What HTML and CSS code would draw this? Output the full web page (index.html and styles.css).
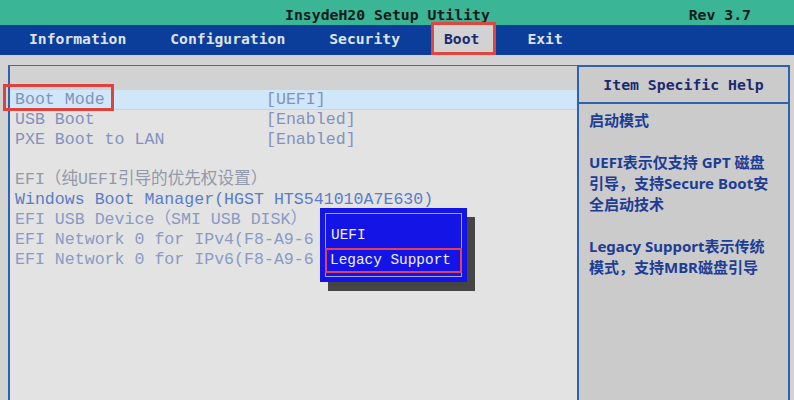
FILE: index.html
```html
<!DOCTYPE html>
<html lang="en">
<head>
  <meta charset="UTF-8">
  <title>InsydeH20 Setup Utility</title>
  <link rel="stylesheet" href="styles.css">
</head>
<body>
  <div class="titlebar">
    <span class="title">InsydeH20 Setup Utility</span>
    <span class="rev">Rev 3.7</span>
  </div>

  <div class="menubar">
    <span class="menu-item">Information</span>
    <span class="menu-item">Configuration</span>
    <span class="menu-item">Security</span>
    <span class="menu-item active">Boot</span>
    <span class="menu-item">Exit</span>
  </div>

  <div class="main">
    <div class="settings">
      <div class="settings-top"></div>
      <div class="row selected">
        <span class="label"><span class="marked">Boot Mode</span></span>
        <span class="value">[UEFI]</span>
      </div>
      <div class="row">
        <span class="label">USB Boot</span>
        <span class="value">[Enabled]</span>
      </div>
      <div class="row">
        <span class="label">PXE Boot to LAN</span>
        <span class="value">[Enabled]</span>
      </div>
      <div class="row"></div>
      <div class="row heading">EFI（纯UEFI引导的优先权设置）</div>
      <div class="row device primary">Windows Boot Manager(HGST HTS541010A7E630)</div>
      <div class="row device">EFI USB Device（SMI USB DISK）</div>
      <div class="row device">EFI Network 0 for IPv4(F8-A9-6</div>
      <div class="row device">EFI Network 0 for IPv6(F8-A9-6</div>

      <div class="popup">
        <div class="popup-inner">
          <div class="option">UEFI</div>
          <div class="option picked">Legacy Support</div>
        </div>
      </div>
    </div>

    <div class="help">
      <div class="help-title">Item Specific Help</div>
      <div class="help-body">
        <p>启动模式</p>
        <p>UEFI表示仅支持 GPT 磁盘<br>引导，支持Secure Boot安<br>全启动技术</p>
        <p>Legacy Support表示传统<br>模式，支持MBR磁盘引导</p>
      </div>
    </div>
  </div>
</body>
</html>
```

FILE: styles.css
```css
body {
  margin: 0;
  width: 794px;
  height: 400px;
  overflow: hidden;
  background: #d3d3d3;
  display: flex;
  flex-direction: column;
  font-family: 'DejaVu Sans Mono', 'Liberation Mono', monospace;
}

.titlebar {
  height: 25px;
  background: #3ab596;
  display: flex;
  align-items: flex-end;
  color: #151a1a;
  font-weight: bold;
  font-size: 14.8px;
  line-height: 21px;
  overflow: hidden;
}

.title {
  padding-left: 285px;
}

.rev {
  margin-left: auto;
  padding-right: 43px;
}

.menubar {
  height: 30px;
  background: #0b3e9a;
  display: flex;
  align-items: stretch;
  gap: 18px;
  padding-left: 16px;
}

.menu-item {
  padding: 0 13px;
  color: #dfe3ee;
  font-weight: bold;
  font-size: 14.7px;
  line-height: 28px;
}

.menu-item.active {
  background: #d2d2d2;
  color: #1b2a6e;
  padding: 0 17px 0 13px;
  margin-top: -3px;
  line-height: 34px;
  outline: 3px solid #e0453f;
  outline-offset: -3px;
}

.main {
  flex: 1;
  display: flex;
  padding: 10px 4px 0 8px;
  min-height: 0;
}

.settings {
  flex: 1;
  position: relative;
  background: #e3e3e3;
  border-left: 2px solid #2d62b3;
  border-top: 1px solid #3b6cb6;
  font-family: 'Liberation Mono', 'Noto Sans CJK SC', monospace;
  font-size: 16.6px;
  color: #8292bd;
}

.settings-top {
  height: 24px;
  background: #d2d2d2;
}

.row {
  height: 20px;
  line-height: 20px;
  display: flex;
  padding-left: 5px;
  white-space: nowrap;
}

.row.selected {
  background: #cfe7f8;
  border-bottom: 1px solid #c4d4e2;
  height: 19px;
}

.label {
  width: 251px;
}

.marked {
  position: relative;
}

.marked::after {
  content: '';
  position: absolute;
  left: -12px;
  top: -6px;
  width: 105px;
  height: 21px;
  border: 3px solid #e0413d;
}

.row.heading {
  color: #9299aa;
}

.row.device {
  color: #8a9ac4;
}

.row.primary {
  color: #5a7cc6;
}

.popup {
  position: absolute;
  left: 310px;
  top: 142px;
  width: 147px;
  height: 74px;
  background: #1414e6;
  box-shadow: 8px 9px 0 #454545;
  box-sizing: border-box;
  padding: 5px;
}

.popup-inner {
  height: 100%;
  box-sizing: border-box;
  border: 1px solid #9fa6e8;
  padding-top: 9px;
  font-family: 'Liberation Mono', monospace;
  font-size: 14.4px;
  color: #f0f0ff;
}

.option {
  height: 25px;
  line-height: 25px;
  padding-left: 5px;
}

.option.picked {
  box-sizing: border-box;
  border: 2px solid #e2405a;
  line-height: 21px;
  padding-left: 3px;
  margin: 0 -1px;
}

.help {
  width: 209px;
  background: #cbcbcb;
  border: 2px solid #2f62ad;
  border-bottom: none;
}

.help-title {
  height: 35px;
  line-height: 36px;
  text-align: center;
  border-bottom: 2px solid #2f62ad;
  font-weight: bold;
  font-size: 14.8px;
  color: #1b2a6e;
}

.help-body {
  padding: 6px 0 0 10px;
  font-family: 'Noto Sans', 'Noto Sans CJK SC', sans-serif;
  font-weight: bold;
  font-size: 15px;
  line-height: 21px;
  color: #1d3d95;
}

.help-body p {
  margin: 0 0 21px;
  white-space: nowrap;
}
```
